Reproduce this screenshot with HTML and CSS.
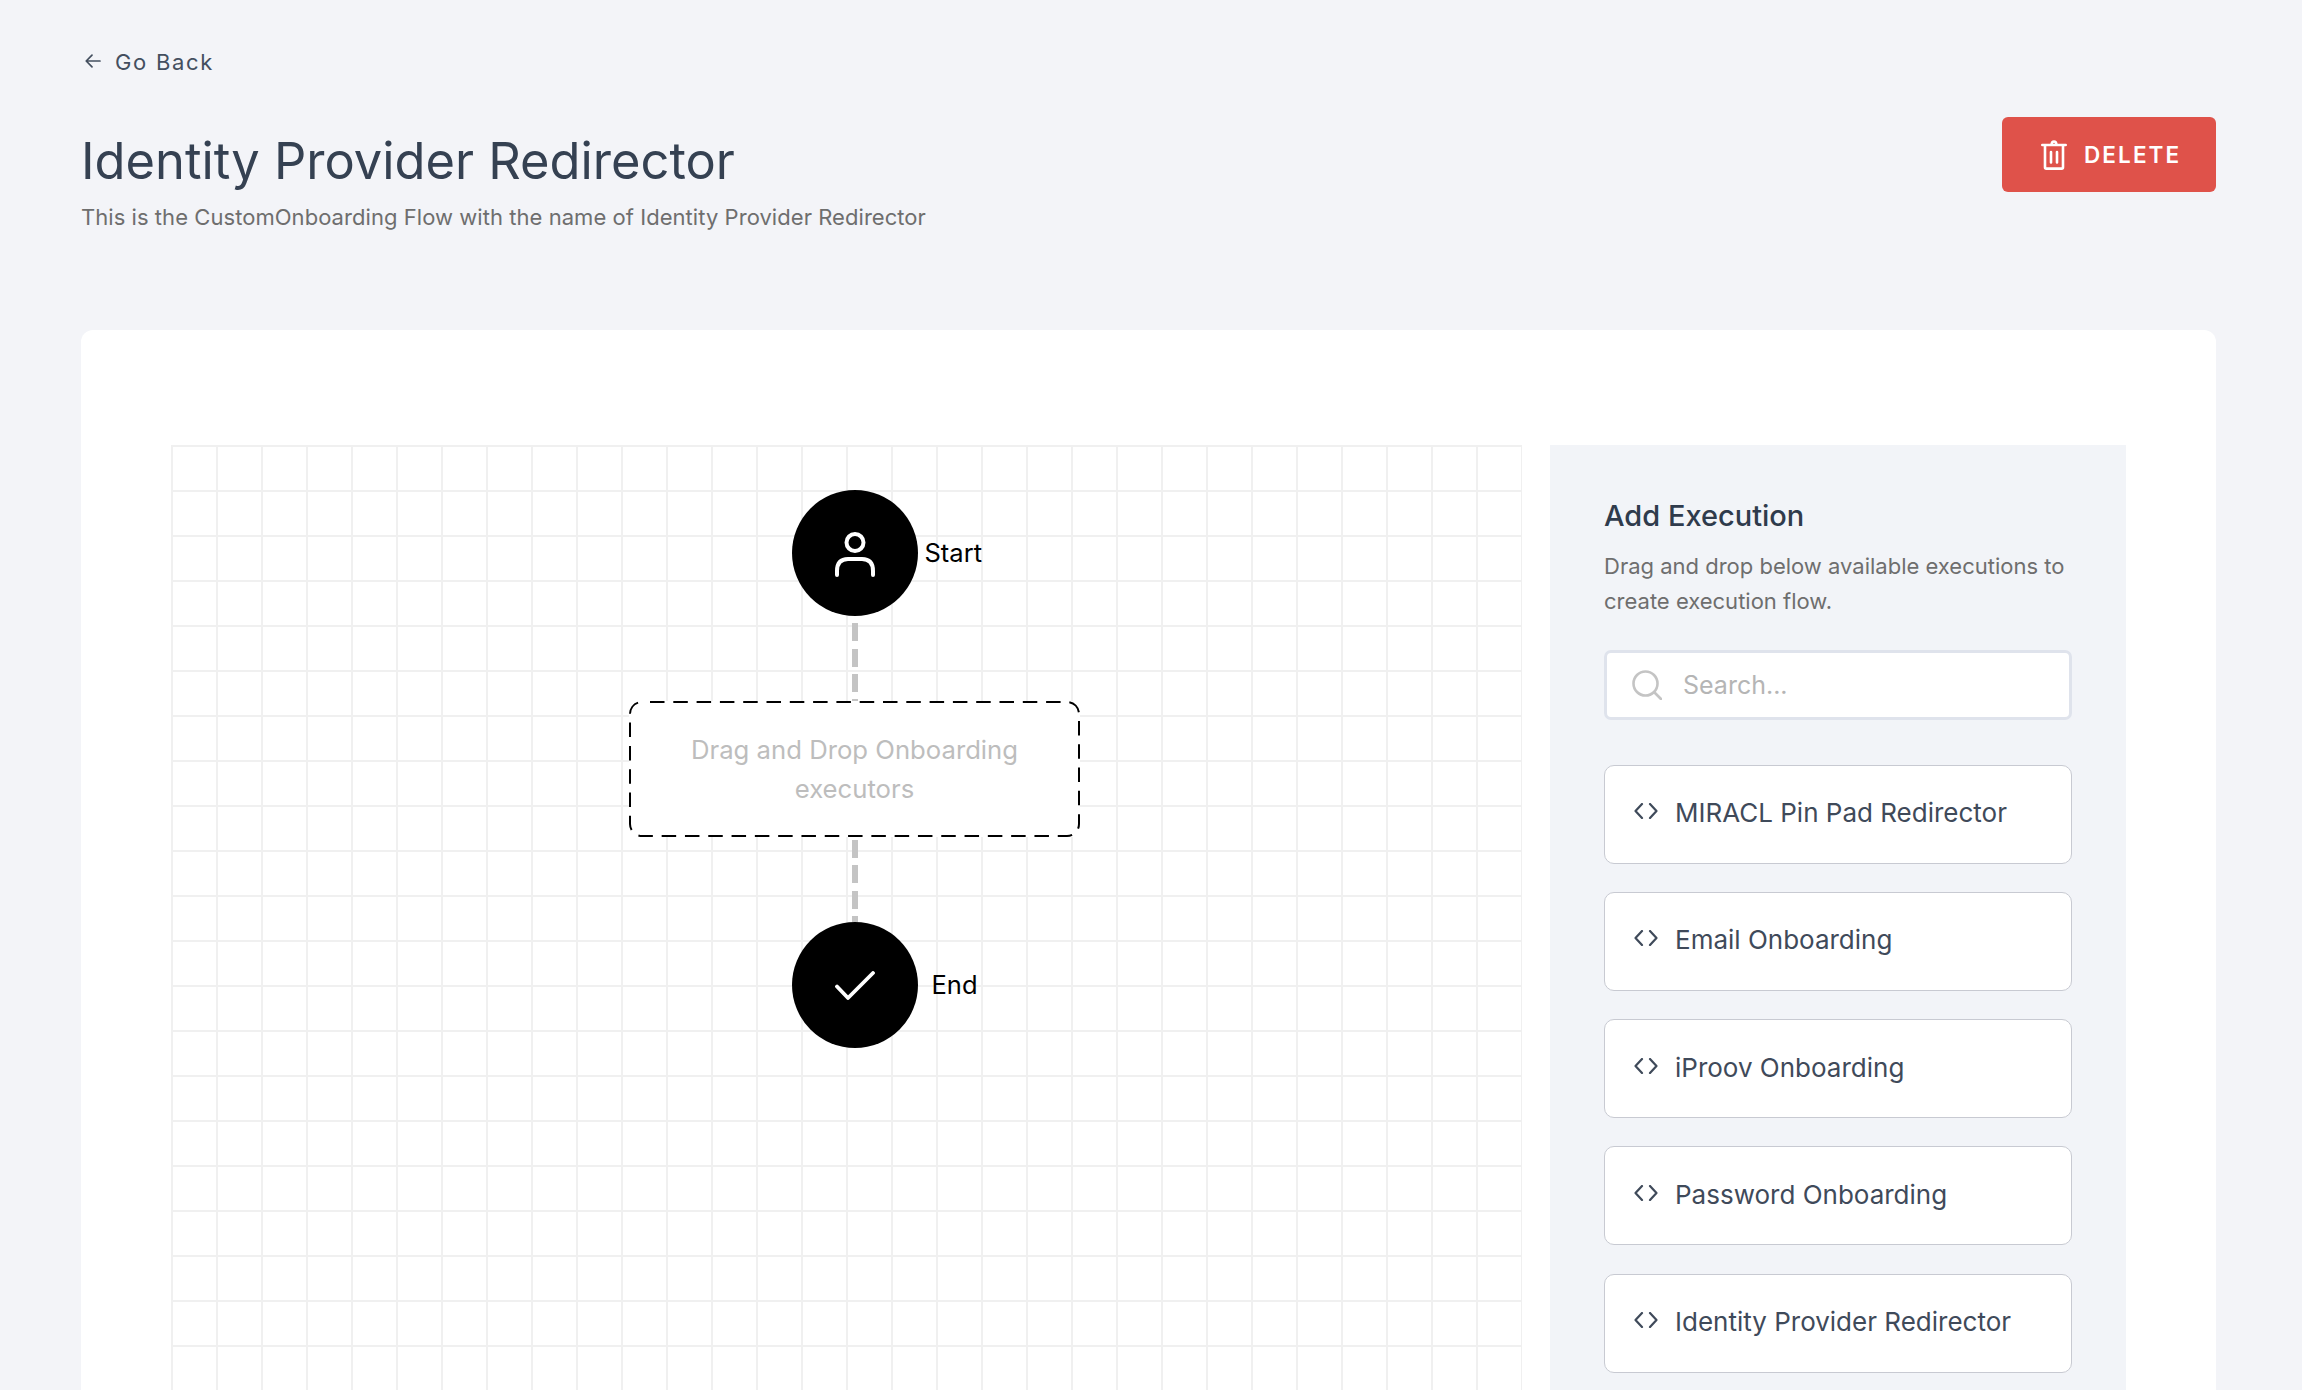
FILE: index.html
```html
<!DOCTYPE html>
<html lang="en">
<head>
  <meta charset="UTF-8">
  <meta name="viewport" content="width=device-width, initial-scale=1.0">
  <link rel="stylesheet" href="styles.css">
</head>
<body>
  <div class="page">
    <!-- Go Back -->
    <a class="back-link" href="#">
      <svg class="back-icon" viewBox="0 0 18 18" fill="none" stroke="currentColor" stroke-width="1.7" stroke-linecap="round" stroke-linejoin="round">
        <path d="M16 9H2.5M8 3.2 2.2 9 8 14.8"/>
      </svg>
      <span>Go Back</span>
    </a>

    <!-- Header -->
    <header class="page-header">
      <div class="page-title">
        <h1>Identity Provider Redirector</h1>
        <p>This is the CustomOnboarding Flow with the name of Identity Provider Redirector</p>
      </div>
      <button class="delete-btn" type="button">
        <svg class="delete-icon" viewBox="0 0 26 30" fill="none" stroke="currentColor" stroke-width="2.6" stroke-linecap="round" stroke-linejoin="round">
          <path d="M1.300 5h23.400M10.500 4.600c.2-2 1.200-3.100 2.500-3.100s2.300 1.100 2.500 3.100"/>
          <path d="M4 5.500v21.800c0 .8.500 1.300 1.300 1.300h15.400c.8 0 1.300-.5 1.300-1.300V5.500"/>
          <path d="M10 12v10.500M16 12v10.500"/>
        </svg>
        <span>DELETE</span>
      </button>
    </header>

    <!-- Main Card -->
    <main class="card">
      <!-- Flow Canvas -->
      <section class="canvas">
        <div class="flow">
          <div class="node">
            <svg class="node-icon icon-user" viewBox="0 0 40 45" fill="none" stroke="#FFFFFF" stroke-width="4" stroke-linecap="round">
              <circle cx="20" cy="10.500" r="8.500"/>
              <path d="M2 43v-4c0-8 4-12 11-12h14c7 0 11 4 11 12v4"/>
            </svg>
            <span class="node-label label-start">Start</span>
          </div>
          <div class="connector connector-top"></div>
          <div class="dropzone">
            <svg class="dropzone-border" viewBox="0 0 451 136" fill="none">
              <rect x="1" y="1" width="449" height="134" rx="12" stroke="#000000" stroke-width="2" stroke-dasharray="14.500 8.800" stroke-dashoffset="-8"/>
            </svg>
            <span>Drag and Drop Onboarding executors</span>
          </div>
          <div class="connector connector-bottom"></div>
          <div class="node">
            <svg class="node-icon" viewBox="0 0 40 29" fill="none" stroke="#FFFFFF" stroke-width="3.800" stroke-linecap="round" stroke-linejoin="round">
              <path d="M2 15.500 13 27 38 2"/>
            </svg>
            <span class="node-label label-end">End</span>
          </div>
        </div>
      </section>

      <!-- Add Execution Panel -->
      <aside class="panel">
        <h2>Add Execution</h2>
        <p>Drag and drop below available executions to create execution flow.</p>

        <div class="search">
          <svg class="search-icon" viewBox="0 0 30 30" fill="none" stroke="#C4C4C4" stroke-width="2.600" stroke-linecap="round">
            <circle cx="13.500" cy="13.500" r="12"/>
            <path d="M22.500 22.500 29 29"/>
          </svg>
          <input type="text" placeholder="Search...">
        </div>

        <ul class="exec-list">
          <li class="exec-item">
            <svg class="code-icon" viewBox="0 0 24 16" fill="none" stroke="currentColor" stroke-width="2.200" stroke-linecap="round" stroke-linejoin="round"><path d="M8 1 1.500 8 8 15M16 1l6.500 7-6.500 7"/></svg>
            <span>MIRACL Pin Pad Redirector</span>
          </li>
          <li class="exec-item">
            <svg class="code-icon" viewBox="0 0 24 16" fill="none" stroke="currentColor" stroke-width="2.200" stroke-linecap="round" stroke-linejoin="round"><path d="M8 1 1.500 8 8 15M16 1l6.500 7-6.500 7"/></svg>
            <span>Email Onboarding</span>
          </li>
          <li class="exec-item">
            <svg class="code-icon" viewBox="0 0 24 16" fill="none" stroke="currentColor" stroke-width="2.200" stroke-linecap="round" stroke-linejoin="round"><path d="M8 1 1.500 8 8 15M16 1l6.500 7-6.500 7"/></svg>
            <span>iProov Onboarding</span>
          </li>
          <li class="exec-item">
            <svg class="code-icon" viewBox="0 0 24 16" fill="none" stroke="currentColor" stroke-width="2.200" stroke-linecap="round" stroke-linejoin="round"><path d="M8 1 1.500 8 8 15M16 1l6.500 7-6.500 7"/></svg>
            <span>Password Onboarding</span>
          </li>
          <li class="exec-item">
            <svg class="code-icon" viewBox="0 0 24 16" fill="none" stroke="currentColor" stroke-width="2.200" stroke-linecap="round" stroke-linejoin="round"><path d="M8 1 1.500 8 8 15M16 1l6.500 7-6.500 7"/></svg>
            <span>Identity Provider Redirector</span>
          </li>
        </ul>
      </aside>
    </main>
  </div>
</body>
</html>
```

FILE: styles.css
```css
/* General Styles */
html, body {
  height: 1390px;
  overflow: hidden;
}

body {
  font-family: 'Inter', sans-serif;
  margin: 0;
  padding: 0;
  background-color: #F3F4F8;
  color: #354152;
}

.page {
  padding: 48px 86px 0 81px;
}

/* Go Back */
.back-link {
  display: flex;
  align-items: center;
  gap: 13px;
  height: 28px;
  padding-left: 3px;
  color: #444F5F;
  font-size: 22px;
  letter-spacing: 1.7px;
  text-decoration: none;
}

.back-icon {
  width: 18px;
  height: 18px;
  margin-top: -2px;
}

/* Header */
.page-header {
  display: flex;
  justify-content: space-between;
  align-items: flex-start;
  margin-top: 41px;
  height: 213px;
}

.page-title {
  padding-top: 15px;
}

.page-header h1 {
  margin: 0;
  font-size: 50.600px;
  font-weight: 400;
  line-height: 58px;
  color: #354152;
}

.page-header p {
  margin: 12px 0 0;
  font-size: 22px;
  line-height: 30px;
  letter-spacing: 0.05px;
  color: #6E6E6E;
}

.delete-btn {
  display: flex;
  align-items: center;
  gap: 17px;
  width: 214px;
  height: 75px;
  padding: 0 0 0 39px;
  border: none;
  border-radius: 6px;
  background-color: #DF524A;
  color: #FFFFFF;
  font-family: inherit;
  font-size: 22.500px;
  font-weight: 600;
  letter-spacing: 2.100px;
}

.delete-icon {
  width: 26px;
  height: 30px;
}

/* Main Card */
.card {
  display: flex;
  gap: 28px;
  padding: 115px 90px 60px;
  background-color: #FFFFFF;
  border-radius: 12px;
}

/* Flow Canvas */
.canvas {
  width: 1351px;
  height: 1200px;
  flex-shrink: 0;
  background-color: #FFFFFF;
  background-image:
    linear-gradient(to right, #F0F0F0 2px, transparent 2px),
    linear-gradient(to bottom, #F0F0F0 2px, transparent 2px);
  background-size: 45px 45px;
}

.flow {
  display: flex;
  flex-direction: column;
  align-items: center;
  width: 451px;
  margin-left: 458px;
  padding-top: 45px;
}

.node {
  position: relative;
  display: flex;
  justify-content: center;
  align-items: center;
  width: 126px;
  height: 126px;
  border-radius: 50%;
  background-color: #000000;
}

.node-icon {
  width: 40px;
}

.icon-user {
  margin-top: 3px;
}

.node-label {
  position: absolute;
  top: 50%;
  transform: translateY(-50%);
  color: #000000;
  font-size: 25.500px;
  line-height: 30px;
}

.label-start {
  left: 133px;
}

.label-end {
  left: 140px;
}

.connector {
  width: 6px;
  background-image: repeating-linear-gradient(to bottom, #C4C4C4 0, #C4C4C4 18px, transparent 18px, transparent 25.5px);
}

.connector-top {
  height: 78px;
  margin-top: 7px;
}

.connector-bottom {
  height: 82px;
  margin-top: 3px;
}

.dropzone {
  position: relative;
  display: flex;
  justify-content: center;
  align-items: center;
  box-sizing: border-box;
  width: 451px;
  height: 136px;
  padding: 0 50px;
  background-color: #FFFFFF;
  color: #BDBDBD;
  font-size: 25.700px;
  line-height: 39px;
  text-align: center;
}

.dropzone-border {
  position: absolute;
  top: 0;
  left: 0;
  width: 451px;
  height: 136px;
}

/* Add Execution Panel */
.panel {
  box-sizing: border-box;
  flex: none;
  width: 576px;
  padding: 48.500px 54px 0;
  background-color: #F2F4F8;
}

.panel h2 {
  margin: 0;
  font-size: 29px;
  font-weight: 500;
  line-height: 44px;
  color: #2F3B4C;
}

.panel p {
  margin: 11px 0 0;
  font-size: 22px;
  line-height: 35px;
  color: #6E6E6E;
}

/* Search */
.search {
  display: flex;
  align-items: center;
  gap: 21px;
  box-sizing: border-box;
  height: 70px;
  margin-top: 31px;
  padding-left: 25px;
  background-color: #FFFFFF;
  border: 3px solid #DFE3EC;
  border-radius: 7px;
}

.search-icon {
  width: 30px;
  height: 30px;
  flex-shrink: 0;
}

.search input {
  flex: 1;
  width: 100%;
  min-width: 0;
  border: none;
  outline: none;
  padding: 0;
  font-family: inherit;
  font-size: 25px;
  background: transparent;
}

.search input::placeholder {
  color: #B5B5B5;
  opacity: 1;
}

/* Execution List */
.exec-list {
  display: flex;
  flex-direction: column;
  gap: 28.300px;
  margin: 45px 0 0;
  padding: 0;
  list-style: none;
}

.exec-item {
  display: flex;
  align-items: flex-start;
  gap: 17px;
  box-sizing: border-box;
  height: 99px;
  padding: 29.500px 28px 0 29px;
  background-color: #FFFFFF;
  border: 1.500px solid #C8CAD2;
  border-radius: 10px;
  color: #3F4A5A;
  font-size: 26px;
  line-height: 36px;
}

.code-icon {
  width: 24px;
  height: 16px;
  margin-top: 8px;
  flex-shrink: 0;
}
```
